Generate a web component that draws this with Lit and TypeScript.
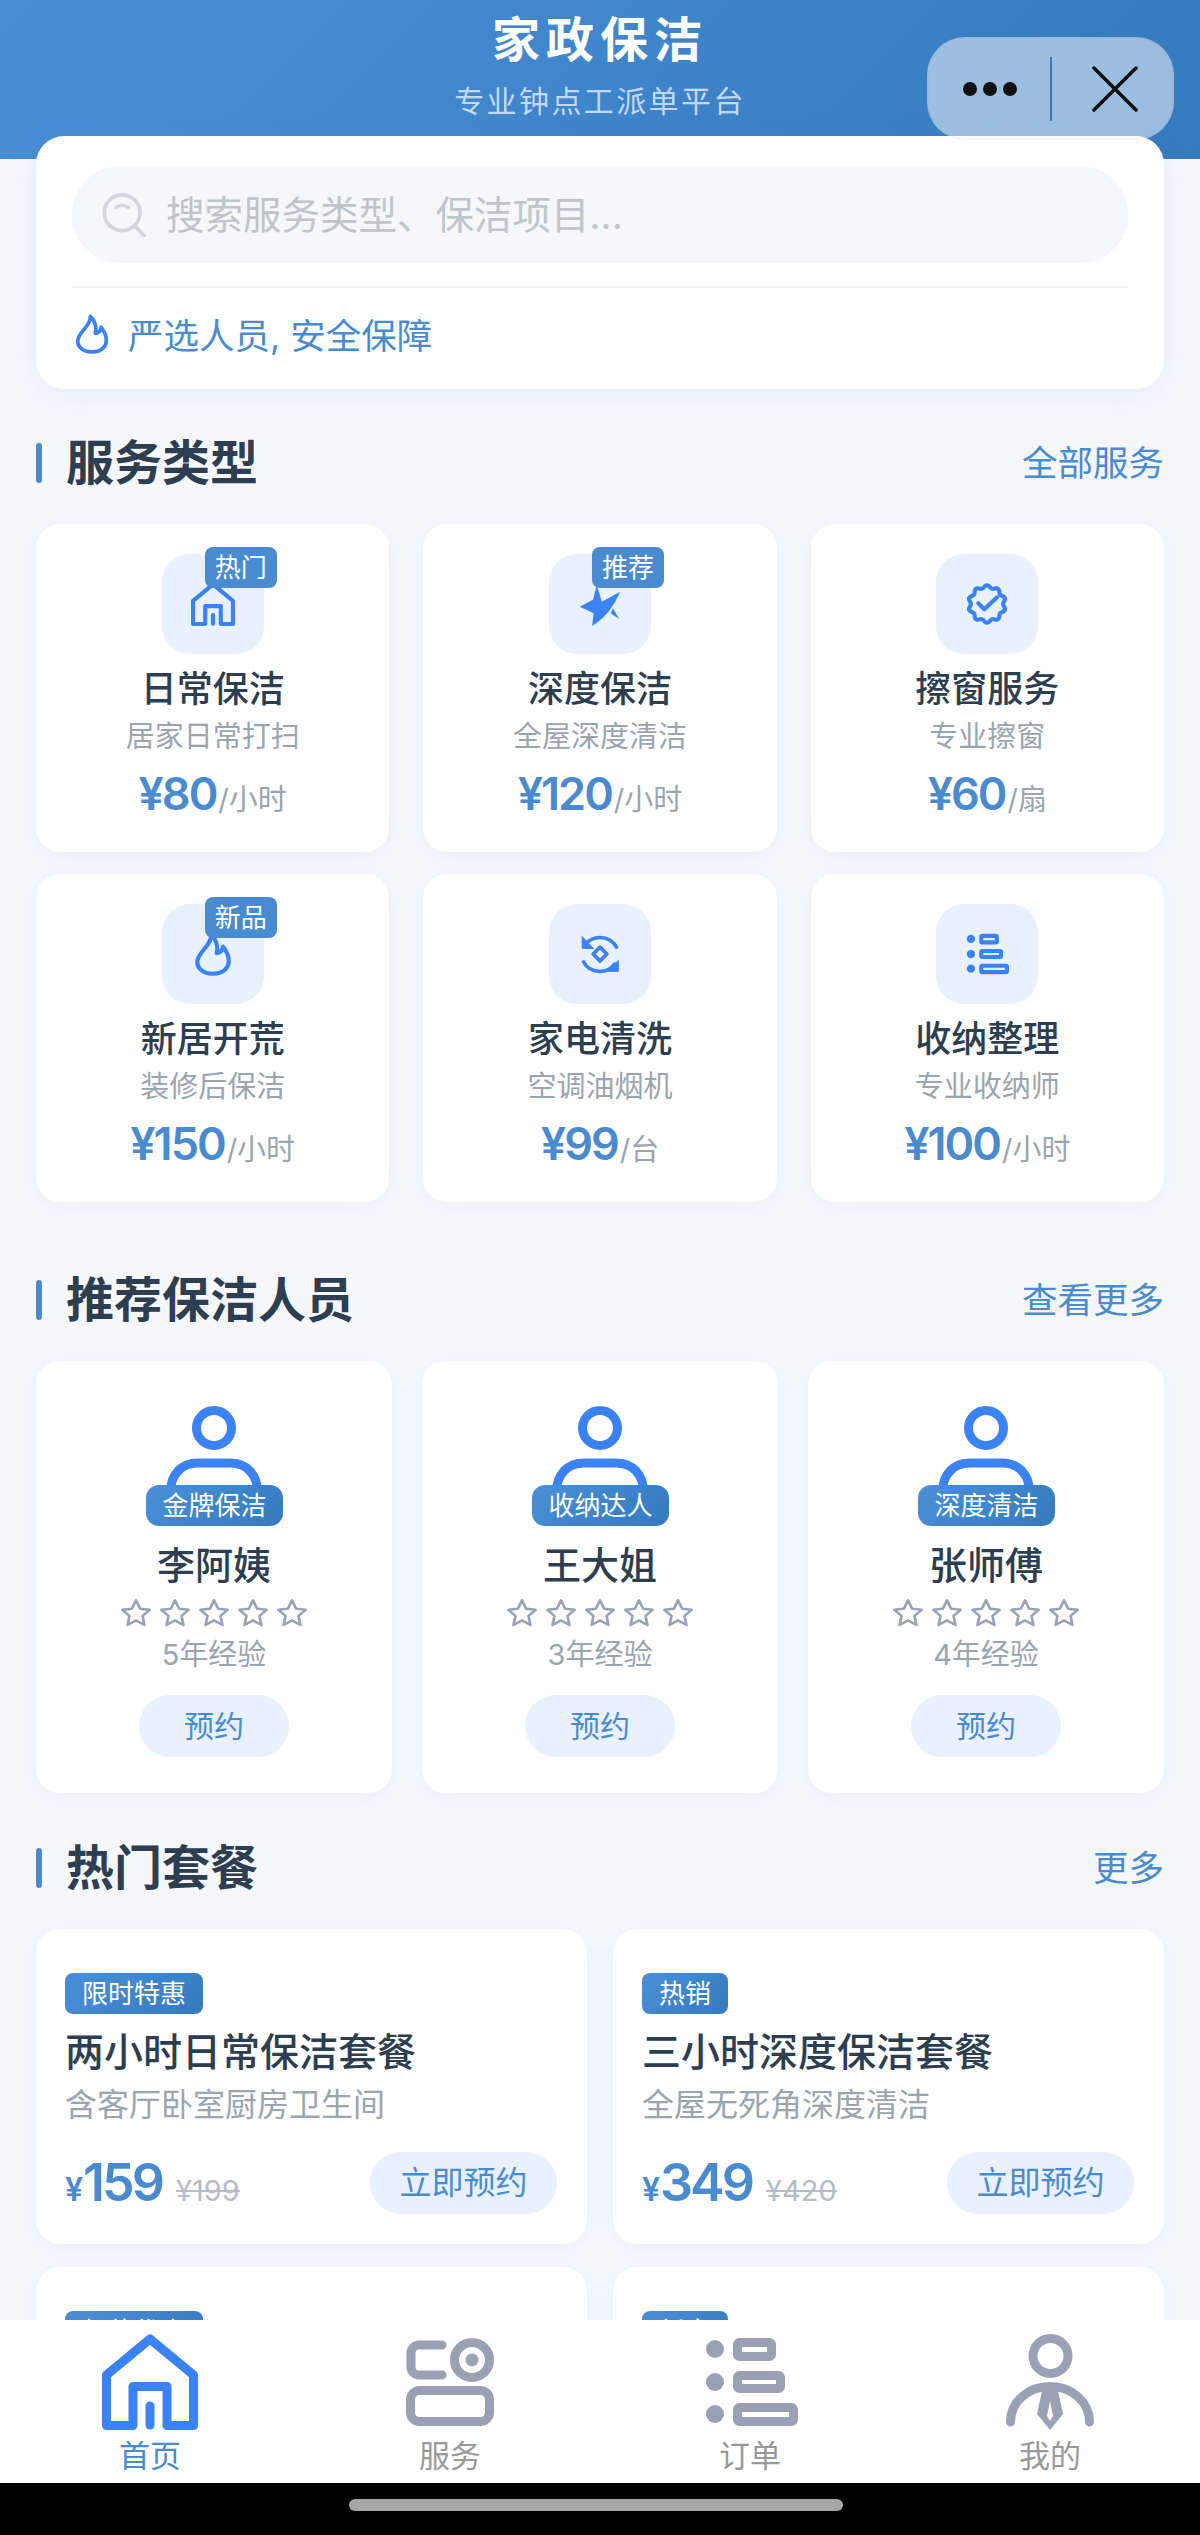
import { LitElement, css, html, svg } from 'lit';
import { customElement } from 'lit/decorators.js';

// all icons are drawn in a 96 x 96 box and take their colour from currentColor
function scallop(cx: number, cy: number, r: number, amp: number, lobes: number) {
  const pts: string[] = [];
  for (let i = 0; i < 120; i++) {
    const a = (i / 120) * Math.PI * 2 - Math.PI / 2;
    const rad = r + amp * Math.cos(lobes * (a + Math.PI / 2));
    pts.push(`${(cx + rad * Math.cos(a)).toFixed(1)},${(cy + rad * Math.sin(a)).toFixed(1)}`);
  }
  return pts.join(' ');
}

const FLAME = 'M44 6C46 24 24 38 16 56C8 76 24 91 48 91C72 91 85 76 82 58C81 48 76 40 70 32C68 42 62 46 56 46C60 32 54 14 44 6Z';

const ICONS: Record<string, unknown> = {
  home: svg`<path d="M4.5 91.5V41L48 5L91.5 41V91.5H65V52.5H31V91.5Z" fill="none" stroke="currentColor" stroke-width="9" stroke-linejoin="round"/><path d="M48 72V91" stroke="currentColor" stroke-width="9" stroke-linecap="round"/>`,
  star: svg`<path d="M4 54L33 38L41 6L52 43L92 21Q72 70 31 96L34 68Z" fill="currentColor"/><path d="M76 57L90 80L72 69Z" fill="currentColor"/>`,
  badge: svg`<polygon points="${scallop(48, 48, 38, 3, 10)}" fill="none" stroke="currentColor" stroke-width="9" stroke-linejoin="round"/><path d="M29 46.5L42 59.6L70 33.5" fill="none" stroke="currentColor" stroke-width="9" stroke-linecap="round" stroke-linejoin="round"/>`,
  flame: svg`<path d="${FLAME}" fill="none" stroke="currentColor" stroke-width="9" stroke-linejoin="round"/>`,
  sync: svg`<path d="M84 33C76 19 63 12 48 12C35 12 24 17 16 27" fill="none" stroke="currentColor" stroke-width="8" stroke-linecap="round"/><path d="M9 10V36H34Z" fill="currentColor" stroke="currentColor" stroke-width="2" stroke-linejoin="round"/><path d="M12 65C19 79 33 86 48 86C61 86 73 80 80 70" fill="none" stroke="currentColor" stroke-width="8" stroke-linecap="round"/><path d="M88 62V86H64Z" fill="currentColor" stroke="currentColor" stroke-width="2" stroke-linejoin="round"/><path d="M48 33L63 48L48 63L33 48Z" fill="none" stroke="currentColor" stroke-width="8" stroke-linejoin="round"/>`,
  list: svg`<circle cx="13" cy="15" r="9" fill="currentColor"/><circle cx="13" cy="48" r="9" fill="currentColor"/><circle cx="13" cy="80" r="9" fill="currentColor"/><rect x="35.5" y="8.5" width="34" height="14" rx="2" fill="none" stroke="currentColor" stroke-width="9"/><rect x="35.5" y="41.5" width="43" height="13" rx="2" fill="none" stroke="currentColor" stroke-width="9"/><rect x="35.5" y="73.5" width="56" height="14" rx="2" fill="none" stroke="currentColor" stroke-width="9"/>`,
  apps: svg`<path d="M40 11H17C12.6 11 9 14.6 9 19V33C9 37.4 12.6 41 17 41H40" fill="none" stroke="currentColor" stroke-width="9" stroke-linecap="round"/><circle cx="70" cy="26" r="17.5" fill="none" stroke="currentColor" stroke-width="9"/><circle cx="70" cy="26" r="6.5" fill="currentColor"/><rect x="8.5" y="56.5" width="79" height="31" rx="9" fill="none" stroke="currentColor" stroke-width="9"/>`,
  user: svg`<circle cx="48.5" cy="22" r="17.5" fill="none" stroke="currentColor" stroke-width="9"/><path d="M8.5 88C8.5 68 26 52.5 48 52.5C70 52.5 87.5 68 87.5 88" fill="none" stroke="currentColor" stroke-width="9" stroke-linecap="round"/><path fill-rule="evenodd" d="M41 52H55L61 80L48 96L35 80ZM48 67L45 82L48 87L51 82Z" fill="currentColor"/>`,
  worker: svg`<circle cx="48" cy="22" r="17.5" fill="none" stroke="currentColor" stroke-width="9"/><path d="M4.5 96V86C4.5 68 16 57 32 57H64C80 57 91.5 68 91.5 86V96" fill="none" stroke="currentColor" stroke-width="9"/>`,
  search: svg`<circle cx="44" cy="43" r="39" fill="none" stroke="currentColor" stroke-width="8"/><path d="M72 72L92 94" stroke="currentColor" stroke-width="8" stroke-linecap="round"/><path d="M30 32Q44 22 58 32" fill="none" stroke="currentColor" stroke-width="7" stroke-linecap="round"/>`,
};

const icon = (name: string, cls: string) =>
  html`<svg class=${cls} viewBox="0 0 96 96">${ICONS[name]}</svg>`;

const SERVICES = [
  { icon: 'home', tag: '热门', name: '日常保洁', desc: '居家日常打扫', price: '¥80', unit: '/小时' },
  { icon: 'star', tag: '推荐', name: '深度保洁', desc: '全屋深度清洁', price: '¥120', unit: '/小时' },
  { icon: 'badge', tag: '', name: '擦窗服务', desc: '专业擦窗', price: '¥60', unit: '/扇' },
  { icon: 'flame', tag: '新品', name: '新居开荒', desc: '装修后保洁', price: '¥150', unit: '/小时' },
  { icon: 'sync', tag: '', name: '家电清洗', desc: '空调油烟机', price: '¥99', unit: '/台' },
  { icon: 'list', tag: '', name: '收纳整理', desc: '专业收纳师', price: '¥100', unit: '/小时' },
];

const CLEANERS = [
  { badge: '金牌保洁', name: '李阿姨', exp: '5年经验' },
  { badge: '收纳达人', name: '王大姐', exp: '3年经验' },
  { badge: '深度清洁', name: '张师傅', exp: '4年经验' },
];

const PACKAGES = [
  { tag: '限时特惠', name: '两小时日常保洁套餐', desc: '含客厅卧室厨房卫生间', price: '159', old: '¥199' },
  { tag: '热销', name: '三小时深度保洁套餐', desc: '全屋无死角深度清洁', price: '349', old: '¥420' },
  { tag: '超值优惠', name: '新居开荒保洁套餐', desc: '装修后全面深度清洁', price: '599', old: '¥699' },
  { tag: '新客', name: '家电清洗组合套餐', desc: '空调油烟机洗衣机', price: '268', old: '¥320' },
];

const TABS = [
  { icon: 'home', label: '首页', active: true },
  { icon: 'apps', label: '服务', active: false },
  { icon: 'list', label: '订单', active: false },
  { icon: 'user', label: '我的', active: false },
];

@customElement('app-root')
export class AppRoot extends LitElement {
  static styles = css`
    :host {
      display: block;
      font-family: Inter, "Noto Sans CJK SC", sans-serif;
      color: #2c3e50;
    }

    .page {
      position: relative;
      display: flex;
      flex-direction: column;
      height: 2535px;
      overflow: hidden;
      background: #f5f7fb;
    }

    .scroll {
      flex: 1;
      min-height: 0;
      overflow: hidden;
    }

    .header {
      height: 159px;
      box-sizing: border-box;
      padding-top: 8px;
      text-align: center;
      color: #fff;
      background: linear-gradient(135deg, #4a90d9, #357abd);
    }

    .header__title {
      font-size: 48px;
      line-height: 64px;
      font-weight: 700;
      letter-spacing: 6px;
    }

    .header__sub {
      margin-top: 7px;
      font-size: 30px;
      line-height: 44px;
      letter-spacing: 2.4px;
      color: rgba(255, 255, 255, 0.7);
    }

    .capsule {
      position: absolute;
      top: 37px;
      left: 927px;
      width: 247px;
      height: 103px;
      box-sizing: border-box;
      display: flex;
      align-items: center;
      border: 2px solid rgba(120, 130, 150, 0.08);
      border-radius: 38px;
      background: rgba(255, 255, 255, 0.5);
    }

    .capsule__dots {
      width: 121px;
      display: flex;
      justify-content: center;
      gap: 6px;
    }

    .capsule__dots span {
      width: 14px;
      height: 14px;
      border-radius: 50%;
      background: #111;
    }

    .capsule__line {
      width: 2px;
      height: 64px;
      background: #3a7abf;
    }

    .capsule__close {
      width: 46px;
      height: 46px;
      margin-left: 40px;
    }

    .search-card {
      margin: -23px 36px 0;
      padding: 30px 36px 34px;
      position: relative;
      border-radius: 28px;
      background: #fff;
      box-shadow: 0 6px 30px rgba(74, 144, 217, 0.08);
    }

    .search {
      height: 97px;
      box-sizing: border-box;
      padding-left: 30px;
      display: flex;
      align-items: center;
      gap: 20px;
      border-radius: 48px;
      background: #f5f7fb;
      font-size: 38.5px;
      color: #bfc5cb;
    }

    .search__icon {
      width: 44px;
      height: 44px;
      color: #d2d6de;
    }

    .search__text {
      padding-bottom: 5px;
    }

    .search-card__line {
      height: 2px;
      margin-top: 23px;
      background: #f0f2f6;
    }

    .notice {
      margin-top: 25px;
      height: 42px;
      display: flex;
      align-items: center;
      gap: 16px;
      font-size: 35.5px;
      color: #4a8bd0;
    }

    .notice__text {
      padding-bottom: 2px;
    }

    .notice__icon {
      width: 40px;
      height: 40px;
      color: #3b82f6;
    }

    .sec-head {
      height: 48px;
      margin: 50px 36px 37px;
      display: flex;
      align-items: center;
      justify-content: space-between;
    }

    .sec-head__title {
      display: flex;
      align-items: center;
      gap: 24px;
      font-size: 48px;
      font-weight: 700;
      line-height: 48px;
    }

    .sec-head__title::before {
      content: "";
      width: 6px;
      height: 40px;
      border-radius: 3px;
      background: #4a8bd0;
    }

    .sec-head__more {
      padding-bottom: 6px;
      font-size: 35.5px;
      color: #4a8bd0;
    }

    .services {
      margin: 0 36px;
      padding-bottom: 24px;
      display: grid;
      grid-template-columns: repeat(3, 1fr);
      gap: 22px 34px;
    }

    .card {
      border-radius: 24px;
      background: #fff;
      box-shadow: 0 4px 20px rgba(74, 144, 217, 0.06);
      text-align: center;
    }

    .service {
      height: 328px;
      box-sizing: border-box;
      padding-top: 30px;
    }

    .tile {
      position: relative;
      width: 102px;
      height: 100px;
      margin: 0 auto;
      display: flex;
      align-items: center;
      justify-content: center;
      border-radius: 28px;
      background: #e8f1fd;
      color: #3b82f6;
    }

    .tile__icon {
      width: 44px;
      height: 44px;
    }

    .tile__tag {
      position: absolute;
      top: -7px;
      right: -13px;
      width: 72px;
      height: 41px;
      border-radius: 8px;
      background: #4a8bd0;
      color: #fff;
      font-size: 26px;
      line-height: 41px;
    }

    .service__name {
      margin-top: 11px;
      font-size: 36px;
      line-height: 48px;
      font-weight: 500;
    }

    .service__desc {
      margin-top: 4px;
      font-size: 29px;
      line-height: 40px;
      color: #9aa5ad;
    }

    .service__price {
      margin-top: 9px;
      line-height: 56px;
      font-size: 29px;
      color: #9aa5ad;
    }

    .service__price b {
      font-size: 45px;
      font-weight: 600;
      letter-spacing: -2px;
      margin-right: 2px;
      color: #4a8bd0;
    }

    .cleaners {
      margin: 0 36px;
      padding-bottom: 1px;
      display: grid;
      grid-template-columns: repeat(3, 1fr);
      gap: 30px;
    }

    .cleaner {
      height: 432px;
      box-sizing: border-box;
      padding-top: 45px;
    }

    .avatar {
      position: relative;
      height: 120px;
      color: #3b82f6;
    }

    .avatar__icon {
      display: block;
      width: 96px;
      height: 96px;
      margin: 0 auto;
    }

    .avatar__badge {
      position: absolute;
      left: 50%;
      bottom: 0;
      width: 137px;
      height: 41px;
      margin-left: -68px;
      border-radius: 13px;
      background: linear-gradient(135deg, #4a90d9, #357abd);
      color: #fff;
      font-size: 26px;
      line-height: 41px;
    }

    .cleaner__name {
      margin-top: 13px;
      font-size: 38px;
      line-height: 52px;
      font-weight: 500;
    }

    .stars {
      margin-top: 8px;
      display: flex;
      justify-content: center;
      gap: 9px;
      color: #9aa3b5;
    }

    .stars svg {
      display: block;
      width: 30px;
      height: 28px;
    }

    .cleaner__exp {
      margin-top: 8px;
      font-size: 29px;
      line-height: 40px;
      color: #9aa5ad;
    }

    .btn {
      height: 62px;
      border-radius: 31px;
      background: #e8f1fd;
      color: #4a8bd0;
      line-height: 62px;
      text-align: center;
    }

    .cleaner__btn {
      width: 150px;
      margin: 20px auto 0;
      font-size: 30px;
    }

    .packages {
      margin: 0 36px;
      display: grid;
      grid-template-columns: repeat(2, 1fr);
      gap: 23px 26px;
    }

    .package {
      height: 315px;
      box-sizing: border-box;
      padding: 44px 30px 0 29px;
      text-align: left;
    }

    .package__tag {
      display: inline-block;
      height: 41px;
      padding: 0 17px;
      vertical-align: top;
      border-radius: 8px;
      background: linear-gradient(135deg, #4a90d9, #357abd);
      color: #fff;
      font-size: 26px;
      line-height: 41px;
    }

    .package__name {
      margin-top: 11px;
      font-size: 39px;
      line-height: 54px;
      font-weight: 500;
    }

    .package__desc {
      margin-top: 4px;
      font-size: 32px;
      line-height: 44px;
      color: #9aa5ad;
    }

    .package__foot {
      margin-top: 24px;
      display: flex;
      align-items: center;
      justify-content: space-between;
    }

    .package__price {
      font-size: 32px;
      font-weight: 600;
      color: #4a8bd0;
    }

    .package__price b {
      font-size: 52px;
      font-weight: 600;
      letter-spacing: -3px;
    }

    .package__price s {
      margin-left: 14px;
      font-size: 29px;
      font-weight: 400;
      color: #b5bcc4;
    }

    .package__btn {
      width: 187px;
      font-size: 32px;
    }

    .tabs {
      height: 163px;
      box-sizing: border-box;
      padding-top: 14px;
      display: grid;
      grid-template-columns: repeat(4, 1fr);
      background: #fff;
    }

    .tab {
      text-align: center;
      font-size: 31px;
      line-height: 44px;
      color: #999;
    }

    .tab--active {
      color: #4a8bd0;
    }

    .tab__icon {
      display: block;
      width: 96px;
      height: 96px;
      margin: 0 auto 4px;
      color: #9aa1b5;
    }

    .tab--active .tab__icon {
      color: #3b82f6;
    }

    .home-bar {
      height: 52px;
      padding: 16px 0 0 349px;
      box-sizing: border-box;
      background: #000;
    }

    .home-bar div {
      width: 494px;
      height: 12px;
      border-radius: 6px;
      background: #a6a6a6;
    }
  `;

  renderHead(title: string, more: string) {
    return html`
      <div class="sec-head">
        <div class="sec-head__title">${title}</div>
        <div class="sec-head__more">${more}</div>
      </div>
    `;
  }

  renderStars() {
    return html`
      <div class="stars">
        ${[1, 2, 3, 4, 5].map(
          () => html`<svg viewBox="1.5 1.5 21 21" preserveAspectRatio="none">
            <path d="M12 2.5l2.9 6.3 6.6.8-4.9 4.6 1.3 6.8-5.9-3.4-5.9 3.4 1.3-6.8-4.9-4.6 6.6-.8z" fill="none" stroke="currentColor" stroke-width="1.9" stroke-linejoin="round"/>
          </svg>`,
        )}
      </div>
    `;
  }

  render() {
    return html`
      <div class="page">
        <div class="scroll">
          <div class="header">
            <div class="header__title">家政保洁</div>
            <div class="header__sub">专业钟点工派单平台</div>
          </div>

          <div class="search-card">
            <div class="search">
              ${icon('search', 'search__icon')}
              <span class="search__text">搜索服务类型、保洁项目...</span>
            </div>
            <div class="search-card__line"></div>
            <div class="notice">
              ${icon('flame', 'notice__icon')}
              <span class="notice__text">严选人员, 安全保障</span>
            </div>
          </div>

          ${this.renderHead('服务类型', '全部服务')}
          <div class="services">
            ${SERVICES.map(
              (s) => html`
                <div class="card service">
                  <div class="tile">
                    ${icon(s.icon, 'tile__icon')}
                    ${s.tag ? html`<div class="tile__tag">${s.tag}</div>` : ''}
                  </div>
                  <div class="service__name">${s.name}</div>
                  <div class="service__desc">${s.desc}</div>
                  <div class="service__price"><b>${s.price}</b>${s.unit}</div>
                </div>
              `,
            )}
          </div>

          ${this.renderHead('推荐保洁人员', '查看更多')}
          <div class="cleaners">
            ${CLEANERS.map(
              (c) => html`
                <div class="card cleaner">
                  <div class="avatar">
                    ${icon('worker', 'avatar__icon')}
                    <div class="avatar__badge">${c.badge}</div>
                  </div>
                  <div class="cleaner__name">${c.name}</div>
                  ${this.renderStars()}
                  <div class="cleaner__exp">${c.exp}</div>
                  <div class="btn cleaner__btn">预约</div>
                </div>
              `,
            )}
          </div>

          ${this.renderHead('热门套餐', '更多')}
          <div class="packages">
            ${PACKAGES.map(
              (p) => html`
                <div class="card package">
                  <div class="package__tag">${p.tag}</div>
                  <div class="package__name">${p.name}</div>
                  <div class="package__desc">${p.desc}</div>
                  <div class="package__foot">
                    <div class="package__price">¥<b>${p.price}</b><s>${p.old}</s></div>
                    <div class="btn package__btn">立即预约</div>
                  </div>
                </div>
              `,
            )}
          </div>
        </div>

        <div class="tabs">
          ${TABS.map(
            (t) => html`
              <div class="tab ${t.active ? 'tab--active' : ''}">
                ${icon(t.icon, 'tab__icon')}${t.label}
              </div>
            `,
          )}
        </div>
        <div class="home-bar"><div></div></div>

        <div class="capsule">
          <div class="capsule__dots"><span></span><span></span><span></span></div>
          <div class="capsule__line"></div>
          <svg class="capsule__close" viewBox="0 0 46 46">
            <path d="M2 2L44 44M44 2L2 44" stroke="#111" stroke-width="3.5" stroke-linecap="round"/>
          </svg>
        </div>
      </div>
    `;
  }
}
